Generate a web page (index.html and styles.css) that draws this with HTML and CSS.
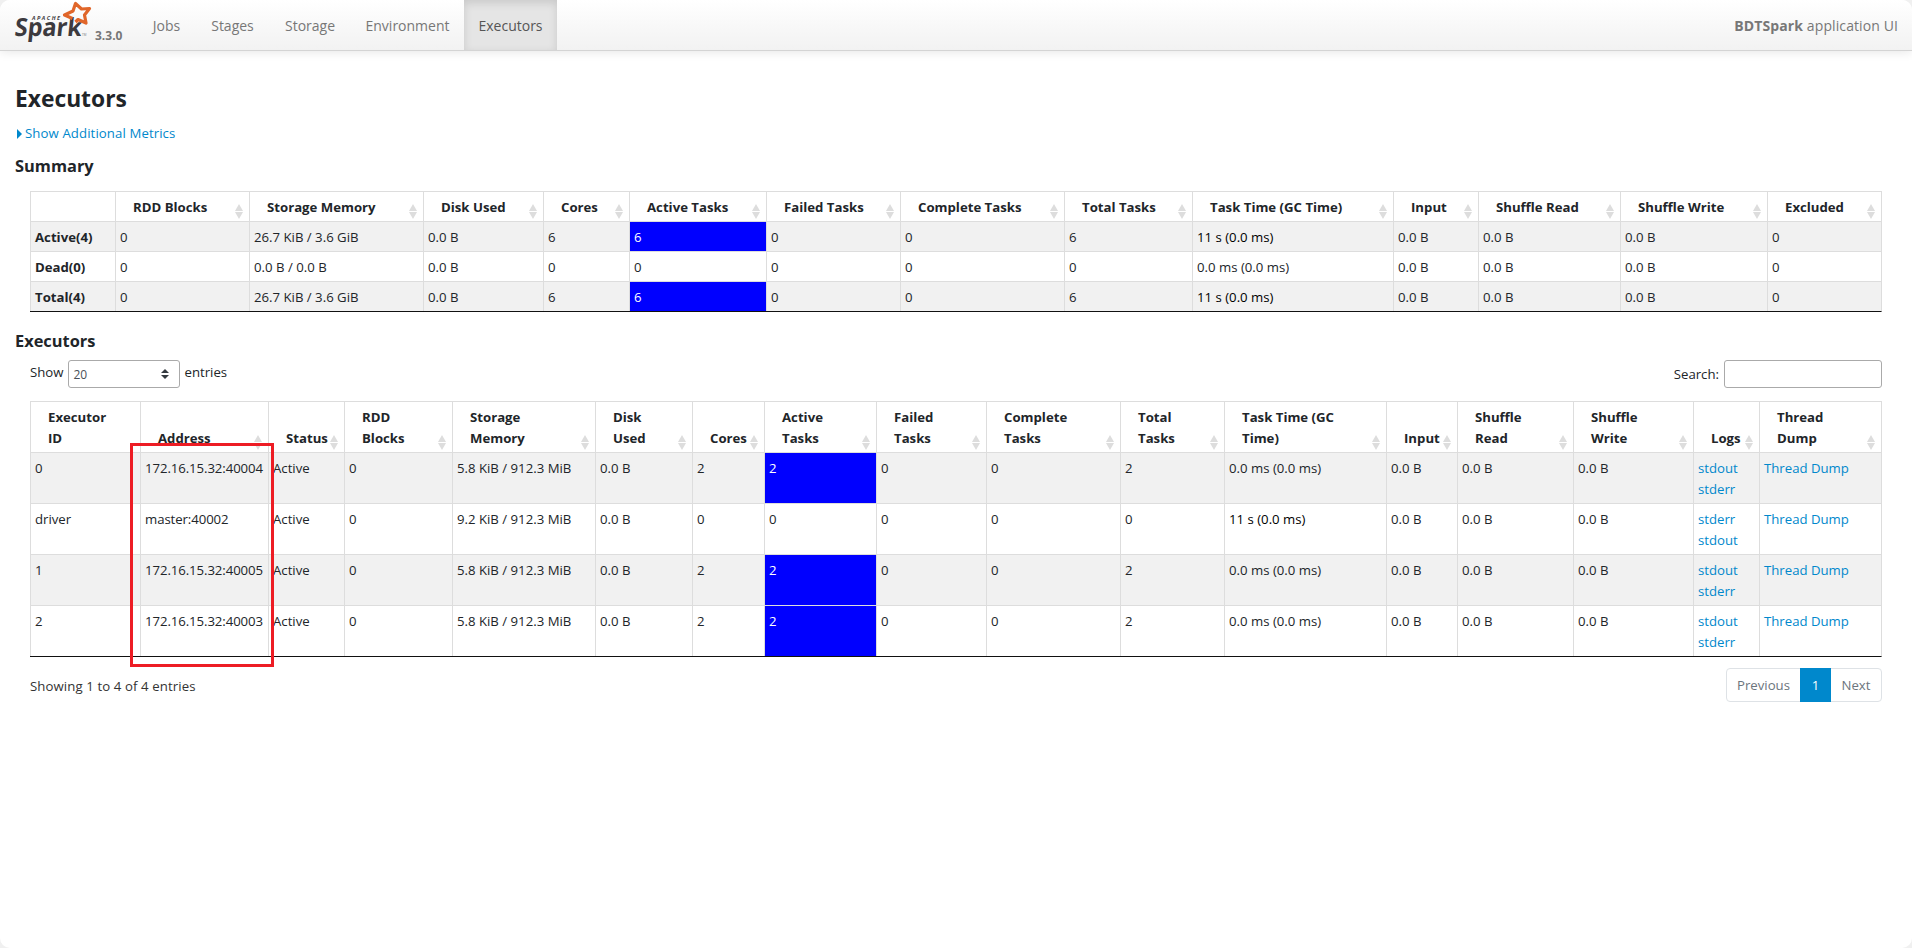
FILE: index.html
```html
<!DOCTYPE html>
<html lang="en">
<head>
  <meta charset="UTF-8" />
  <meta name="viewport" content="width=device-width, initial-scale=1" />
  <title>BDTSpark - Executors</title>
  <link rel="stylesheet" href="styles.css">
</head>
<body>
  <nav class="navbar">
    <a class="brand" href="#">
      <svg class="logo" width="80" height="46" viewBox="0 0 80 46">
        <text class="logo-small" x="17" y="19.5" textLength="28">APACHE</text>
        <text class="logo-name" x="0" y="0" textLength="67" lengthAdjust="spacingAndGlyphs" transform="translate(-1 35.5) skewX(-6)">Spark</text>
        <path class="logo-star" d="M60.5 22 L63 19.5 L71 23 L69.5 15 L74.5 8.5 L66.5 9 L60.5 3.5 L58 11 L49.5 15 L57.5 18.5"/>
        <text class="logo-tm" x="67" y="36">TM</text>
      </svg>
      <span class="version">3.3.0</span>
    </a>
    <ul class="nav-links">
      <li><a href="#">Jobs</a></li>
      <li><a href="#">Stages</a></li>
      <li><a href="#">Storage</a></li>
      <li><a href="#">Environment</a></li>
      <li class="active"><a href="#">Executors</a></li>
    </ul>
    <span class="app-name"><strong>BDTSpark</strong> application UI</span>
  </nav>

  <main class="page">
    <h3>Executors</h3>
    <a class="metrics-toggle" href="#"><span class="arrow-closed"></span>Show Additional Metrics</a>

    <h4 class="summary-title">Summary</h4>
    <div class="table-wrap">
      <table class="data-table summary-table">
        <colgroup>
          <col style="width: 85px"><col style="width: 134px"><col style="width: 174px"><col style="width: 120px"><col style="width: 86px"><col style="width: 137px"><col style="width: 134px"><col style="width: 164px"><col style="width: 128px"><col style="width: 201px"><col style="width: 85px"><col style="width: 142px"><col style="width: 147px"><col style="width: 114px">
        </colgroup>
        <thead>
          <tr>
            <th class="no-sort"></th>
            <th>RDD Blocks</th>
            <th>Storage Memory</th>
            <th>Disk Used</th>
            <th>Cores</th>
            <th>Active Tasks</th>
            <th>Failed Tasks</th>
            <th>Complete Tasks</th>
            <th>Total Tasks</th>
            <th>Task Time (GC Time)</th>
            <th>Input</th>
            <th>Shuffle Read</th>
            <th>Shuffle Write</th>
            <th>Excluded</th>
          </tr>
        </thead>
        <tbody>
          <tr><td><b>Active(4)</b></td><td>0</td><td>26.7 KiB / 3.6 GiB</td><td>0.0 B</td><td>6</td><td class="busy">6</td><td>0</td><td>0</td><td>6</td><td class="gc">11 s (0.0 ms)</td><td>0.0 B</td><td>0.0 B</td><td>0.0 B</td><td>0</td></tr>
          <tr><td><b>Dead(0)</b></td><td>0</td><td>0.0 B / 0.0 B</td><td>0.0 B</td><td>0</td><td>0</td><td>0</td><td>0</td><td>0</td><td>0.0 ms (0.0 ms)</td><td>0.0 B</td><td>0.0 B</td><td>0.0 B</td><td>0</td></tr>
          <tr><td><b>Total(4)</b></td><td>0</td><td>26.7 KiB / 3.6 GiB</td><td>0.0 B</td><td>6</td><td class="busy">6</td><td>0</td><td>0</td><td>6</td><td class="gc">11 s (0.0 ms)</td><td>0.0 B</td><td>0.0 B</td><td>0.0 B</td><td>0</td></tr>
        </tbody>
      </table>
    </div>

    <h4 class="executors-title">Executors</h4>
    <div class="table-wrap">
      <div class="table-controls">
        <label class="length">Show
          <span class="select">20
            <svg width="8" height="10" viewBox="0 0 8 10"><path fill="#343a40" d="M4 0L0 4h8zM4 10L0 6h8z"/></svg>
          </span>
          entries</label>
        <label class="search">Search: <input type="text"></label>
      </div>
      <div class="executors-box">
        <table class="data-table executors-table">
          <colgroup>
            <col style="width: 110px"><col style="width: 128px"><col style="width: 76px"><col style="width: 108px"><col style="width: 143px"><col style="width: 97px"><col style="width: 72px"><col style="width: 112px"><col style="width: 110px"><col style="width: 134px"><col style="width: 104px"><col style="width: 162px"><col style="width: 71px"><col style="width: 116px"><col style="width: 120px"><col style="width: 66px"><col style="width: 122px">
          </colgroup>
          <thead>
            <tr>
              <th class="no-sort">Executor<br>ID</th>
              <th>Address</th>
              <th>Status</th>
              <th>RDD<br>Blocks</th>
              <th>Storage<br>Memory</th>
              <th>Disk<br>Used</th>
              <th>Cores</th>
              <th>Active<br>Tasks</th>
              <th>Failed<br>Tasks</th>
              <th>Complete<br>Tasks</th>
              <th>Total<br>Tasks</th>
              <th>Task Time (GC<br>Time)</th>
              <th>Input</th>
              <th>Shuffle<br>Read</th>
              <th>Shuffle<br>Write</th>
              <th>Logs</th>
              <th>Thread<br>Dump</th>
            </tr>
          </thead>
          <tbody>
            <tr><td>0</td><td class="address">172.16.15.32:40004</td><td>Active</td><td>0</td><td>5.8 KiB / 912.3 MiB</td><td>0.0 B</td><td>2</td><td class="busy">2</td><td>0</td><td>0</td><td>2</td><td>0.0 ms (0.0 ms)</td><td>0.0 B</td><td>0.0 B</td><td>0.0 B</td><td><a href="#">stdout</a><br><a href="#">stderr</a></td><td><a href="#">Thread Dump</a></td></tr>
            <tr><td>driver</td><td class="address">master:40002</td><td>Active</td><td>0</td><td>9.2 KiB / 912.3 MiB</td><td>0.0 B</td><td>0</td><td>0</td><td>0</td><td>0</td><td>0</td><td class="gc">11 s (0.0 ms)</td><td>0.0 B</td><td>0.0 B</td><td>0.0 B</td><td><a href="#">stderr</a><br><a href="#">stdout</a></td><td><a href="#">Thread Dump</a></td></tr>
            <tr><td>1</td><td class="address">172.16.15.32:40005</td><td>Active</td><td>0</td><td>5.8 KiB / 912.3 MiB</td><td>0.0 B</td><td>2</td><td class="busy">2</td><td>0</td><td>0</td><td>2</td><td>0.0 ms (0.0 ms)</td><td>0.0 B</td><td>0.0 B</td><td>0.0 B</td><td><a href="#">stdout</a><br><a href="#">stderr</a></td><td><a href="#">Thread Dump</a></td></tr>
            <tr><td>2</td><td class="address">172.16.15.32:40003</td><td>Active</td><td>0</td><td>5.8 KiB / 912.3 MiB</td><td>0.0 B</td><td>2</td><td class="busy">2</td><td>0</td><td>0</td><td>2</td><td>0.0 ms (0.0 ms)</td><td>0.0 B</td><td>0.0 B</td><td>0.0 B</td><td><a href="#">stdout</a><br><a href="#">stderr</a></td><td><a href="#">Thread Dump</a></td></tr>
          </tbody>
        </table>
        <div class="highlight"></div>
      </div>
      <div class="table-footer">
        <span class="info">Showing 1 to 4 of 4 entries</span>
        <ul class="pagination">
          <li class="prev">Previous</li>
          <li class="current">1</li>
          <li class="next">Next</li>
        </ul>
      </div>
    </div>
  </main>
</body>
</html>
```
FILE: styles.css
```css
* {
  box-sizing: border-box;
}

html {
  background: #f0f0f0;
}

body {
  margin: 0;
  height: 948px;
  overflow: hidden;
  background: #fff;
  border-radius: 10px;
  font-family: "Open Sans", "Noto Sans", sans-serif;
  font-size: 13.2px;
  line-height: 21px;
  color: #212529;
}

a {
  color: #08c;
  text-decoration: none;
}

ul {
  list-style: none;
  margin: 0;
  padding: 0;
}

/* Top bar */
.navbar {
  display: flex;
  height: 51px;
  padding: 0 14px 0 15px;
  border-bottom: 1px solid #d4d4d4;
  background: linear-gradient(to bottom, #fff, #f2f2f2);
  box-shadow: 0 1px 10px rgba(0, 0, 0, 0.1);
  font-size: 14px;
  color: #777;
}

.brand {
  display: flex;
  width: 122px;
  color: #777;
}

.logo {
  flex: none;
  overflow: visible;
}

.logo-name {
  font: bold 25px "Open Sans", sans-serif;
  fill: #3c3a3e;
}

.logo-small {
  font: italic bold 5.5px "Open Sans", sans-serif;
  fill: #3c3a3e;
}

.logo-tm {
  font: 3px "Open Sans", sans-serif;
  fill: #777;
}

.logo-star {
  fill: none;
  stroke: #e0662a;
  stroke-width: 3.2;
  stroke-linejoin: round;
}

.version {
  padding-top: 25px;
  font-size: 12px;
  font-weight: 700;
}

.nav-links {
  display: flex;
}

.nav-links li {
  padding: 15px 0 14px;
  text-align: center;
  width: 59px;
}

.nav-links li:nth-child(2) { width: 73px; }
.nav-links li:nth-child(3) { width: 82px; }
.nav-links li:nth-child(4) { width: 113px; }
.nav-links li:nth-child(5) { width: 93px; }

.nav-links a {
  color: #777;
}

.nav-links .active {
  background: #e5e5e5;
  box-shadow: inset 0 3px 8px rgba(0, 0, 0, 0.125);
}

.nav-links .active a {
  color: #555;
}

.app-name {
  margin-left: auto;
  padding-top: 15px;
  letter-spacing: 0.1px;
}

/* Page content */
.page {
  padding: 31px 15px 0;
}

h3 {
  margin: 0;
  font-size: 22.8px;
  font-weight: 700;
  line-height: 34px;
}

h4 {
  margin: 0;
  font-size: 16.4px;
  font-weight: 700;
  line-height: 22px;
}

.metrics-toggle {
  display: flex;
  align-items: center;
  margin-top: 7px;
  padding-left: 2px;
  letter-spacing: 0.1px;
}

.arrow-closed {
  margin-right: 3px;
  border: 5px solid transparent;
  border-left-color: #08c;
  border-right: 0;
}

.summary-title {
  margin-top: 11px;
}

.executors-title {
  margin-top: 18px;
}

.table-wrap {
  padding: 0 15px;
}

.summary-title + .table-wrap {
  margin-top: 14px;
}

.data-table {
  width: 1852px;
  table-layout: fixed;
  border-collapse: separate;
  border-spacing: 0;
  border-right: 1px solid #ddd;
  border-bottom: 1px solid #111;
}

.data-table th,
.data-table td {
  padding: 5px 4px 3px;
  border-left: 1px solid #ddd;
  border-top: 1px solid #ddd;
  text-align: left;
  vertical-align: top;
  white-space: nowrap;
}

.data-table th {
  position: relative;
  padding-left: 17px;
  font-weight: 700;
  vertical-align: bottom;
}

/* Sort arrows */
.data-table th:not(.no-sort)::before,
.data-table th:not(.no-sort)::after {
  content: "";
  position: absolute;
  right: 6px;
  border: 4px solid transparent;
}

.data-table th:not(.no-sort)::before {
  bottom: 10px;
  border-top: 0;
  border-bottom: 7px solid #ddd;
}

.data-table th:not(.no-sort)::after {
  bottom: 2px;
  border-bottom: 0;
  border-top: 7px solid #ddd;
}

.data-table tbody tr:nth-child(odd) {
  background: #f1f1f1;
}

.data-table .busy {
  background: #00f;
  background-clip: padding-box;
  color: #fff;
}

.data-table .gc {
  color: #000;
}

.data-table .address {
  letter-spacing: -0.08px;
}

.table-controls {
  display: flex;
  justify-content: space-between;
  height: 49px;
  padding-top: 8px;
}

.length {
  display: flex;
  gap: 4px;
  line-height: 25px;
}

.select {
  display: flex;
  align-items: center;
  justify-content: space-between;
  width: 112px;
  height: 28px;
  margin-left: 1px;
  padding: 0 10px 0 4px;
  border: 1px solid #aaa;
  border-radius: 3px;
  font-size: 12px;
  color: #495057;
}

.search {
  display: flex;
  gap: 5px;
  line-height: 28px;
}

.search input {
  width: 158px;
  height: 28px;
  border: 1px solid #aaa;
  border-radius: 3px;
}

.executors-box {
  position: relative;
}

.executors-table tbody tr {
  height: 51px;
}

.highlight {
  position: absolute;
  left: 100px;
  top: 42px;
  width: 144px;
  height: 224px;
  border: 3px solid #ed1c24;
}

.table-footer {
  display: flex;
  justify-content: space-between;
  padding-top: 11px;
}

.info {
  padding-top: 8px;
  color: #333;
  letter-spacing: 0.1px;
}

.pagination {
  display: flex;
  height: 34px;
  border: 1px solid #dee2e6;
  border-radius: 4px;
  line-height: 32px;
  text-align: center;
  color: #6c757d;
}

.prev {
  width: 73px;
}

.current {
  width: 31px;
  margin: -1px 0;
  line-height: 34px;
  background: #08c;
  color: #fff;
}

.next {
  width: 50px;
}
```
